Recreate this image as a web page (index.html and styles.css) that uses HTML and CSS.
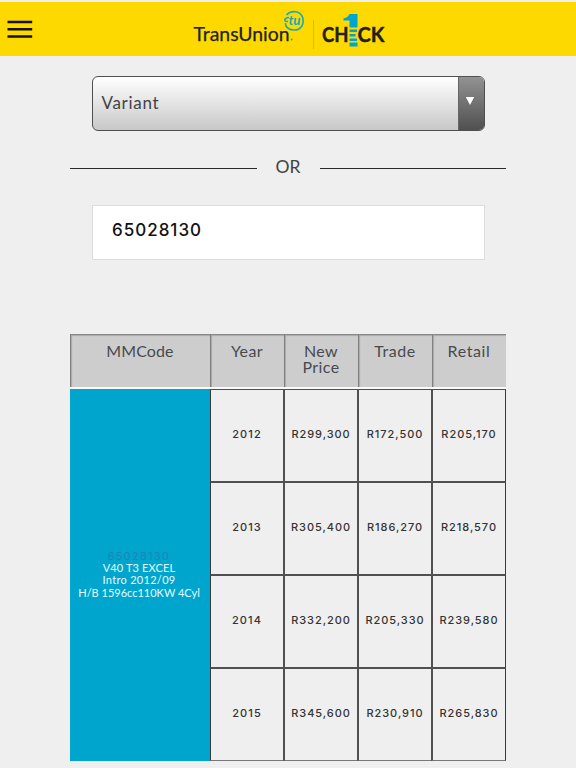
FILE: index.html
```html
<!DOCTYPE html>
<html lang="en">
<head>
<meta charset="utf-8">
<title>TransUnion 1Check</title>
<link rel="stylesheet" href="styles.css">
</head>
<body>
<header class="topbar">
  <button class="menu" aria-label="Menu"><svg width="26" height="18" viewBox="0 0 26 18"><path d="M.5 1.900H25.200M.5 9.300H25.200M.5 16.600H25.200"/></svg></button>
  <svg class="brand" width="196" height="42" viewBox="0 0 196 42" role="img" aria-label="TransUnion 1Check">
    <text class="word" x="1.5" y="31.5" textLength="96" lengthAdjust="spacingAndGlyphs">TransUnion</text>
    <circle class="dot" cx="99.7" cy="30.5" r=".9"/>
    <path class="ring" d="M94.500 6C99 1 108 1.500 110.500 8C113 16 108 21.500 101.500 21C96 21 93 17 93.500 14M97 8.500C91.500 9 91.500 13 96 12.500"/>
    <text class="tu" x="96.5" y="16" textLength="12" lengthAdjust="spacingAndGlyphs">tu</text>
    <path class="rule" d="M121.500 11V40"/>
    <text class="check" x="130" y="32.5" textLength="26.5" lengthAdjust="spacingAndGlyphs">CH</text>
    <text class="check" x="165.5" y="32.5" textLength="27" lengthAdjust="spacingAndGlyphs">CK</text>
    <path class="one" d="M157.500 5H165.500V18.500H157.500V11.500H151.500V9.500Q156 8.500 157.500 5ZM157.500 20.500H165V23H157.500ZM157.500 25H163.500V27.500H157.500ZM157.500 29.500H165V32H157.500ZM157.500 33.500H165.500V37.500H157.500Z"/>
  </svg>
</header>
<main class="content">
  <div class="select"><span class="select-label">Variant</span><span class="select-arrow"><svg width="10" height="8" viewBox="0 0 10 8"><path d="M.8 0H9.200L5 8Z"/></svg></span></div>
  <div class="divider"><span>OR</span></div>
  <div class="code-input">65028130</div>
  <section class="prices">
    <div class="head grid"><div><span class="h-code">MMCode</span></div><div><span class="h-year">Year</span></div><div><span class="h-price">New<br>Price</span></div><div><span class="h-trade">Trade</span></div><div><span class="h-retail">Retail</span></div></div>
    <div class="body grid">
      <div class="vehicle"><a>65028130</a><span class="model">V40 T3 EXCEL</span><span class="intro">Intro 2012/09</span><span class="engine">H/B 1596cc110KW 4Cyl</span></div>
      <div class="cell year">2012</div><div class="cell">R299,300</div><div class="cell">R172,500</div><div class="cell last">R205,170</div>
      <div class="cell year">2013</div><div class="cell">R305,400</div><div class="cell">R186,270</div><div class="cell last">R218,570</div>
      <div class="cell year">2014</div><div class="cell">R332,200</div><div class="cell">R205,330</div><div class="cell last">R239,580</div>
      <div class="cell year">2015</div><div class="cell">R345,600</div><div class="cell">R230,910</div><div class="cell last">R265,830</div>
    </div>
  </section>
</main>
</body>
</html>
```
FILE: styles.css
```css
* { box-sizing: border-box; }
body {
  margin: 0;
  height: 768px;
  overflow: hidden;
  background: #efefef;
  color: #424346;
  font-family: Lato, "Liberation Sans", sans-serif;
}
.topbar {
  display: flex;
  align-items: flex-start;
  height: 54px;
  margin-top: 2px;
  background: #fdd900;
}
.menu {
  width: 25px;
  margin: 18px 0 0 7px;
  padding: 0;
  border: 0;
  background: none;
}
.menu svg { display: block; fill: none; stroke: #151200; stroke-width: 2.5; }
.brand { margin: 7px 0 0 159.5px; overflow: visible; }
.word { font: 19px Lato, sans-serif; fill: #231f20; stroke: #231f20; stroke-width: .25; }
.dot { fill: #8e7b11; }
.ring { fill: none; stroke: #19aaba; stroke-width: 1.6; }
.tu { font: italic bold 14px Lato, sans-serif; fill: #19aaba; }
.rule { stroke: #dab90a; stroke-width: 1; }
.check { font: bold 20px Lato, sans-serif; fill: #231f20; stroke: #231f20; stroke-width: .4; }
.one { fill: #00a5ce; }
.content { width: 436px; margin: 0 0 0 70px; }
.select {
  display: flex;
  width: 393px;
  height: 55px;
  margin: 20px 0 0 21.5px;
  overflow: hidden;
  border: 1.5px solid #505050;
  border-radius: 6px;
  background: linear-gradient(#fff, #c8c8c8);
}
.select-label { flex: 1; padding: 16px 0 0 9px; font-size: 17px; line-height: 20px; letter-spacing: .7px; }
.select-arrow { width: 26px; padding: 20px 0 0 6px; border-left: 1px solid #666; background: linear-gradient(#929292, #505050); }
.select-arrow svg { display: block; fill: #fff; }
.divider {
  display: flex;
  align-items: center;
  gap: 19px;
  height: 24px;
  margin-top: 24px;
  font-size: 17.5px;
}
.divider::before, .divider::after { content: ""; flex: 1; height: 1.5px; margin-top: 3px; background: #29292b; }
.divider span { width: 25px; text-align: center; line-height: 24px; }
.code-input {
  width: 393px;
  height: 55px;
  margin: 26px 0 0 21.5px;
  padding: 13px 0 0 19.5px;
  border: 1px solid #dcdcdc;
  background: #fff;
  color: #111;
  font: 500 17px/22px Inter, sans-serif;
  letter-spacing: 1px;
}
.prices { margin-top: 74px; }
.grid { display: grid; grid-template-columns: 140px 73px 74px 74px 75px; }
.head { grid-template-columns: 140px 74px 74px 74px 74px; height: 53px; margin-bottom: 2px; box-shadow: 0 2px #fafafa; }
.head div {
  padding: 8px 1px 0 0;
  border-top: 1px solid #888;
  border-left: 1px solid #808080;
  background: #cdcdcd;
  box-shadow: inset 1px 1px 1px #aaa;
  color: #484a50;
  font-size: 16px;
  line-height: 16px;
  text-align: center;
}
.h-code { letter-spacing: .1px; }
.h-year, .h-price { letter-spacing: .4px; }
.h-trade, .h-retail { letter-spacing: .6px; }
.body { grid-template-rows: 92px 93px 93px 94px; }
.vehicle {
  grid-row: 1 / 5;
  display: flex;
  flex-direction: column;
  align-items: center;
  padding: 160.5px 2px 0 0;
  background: #00a5ce;
  color: #e5fbff;
  font-size: 11px;
  line-height: 12.4px;
  white-space: nowrap;
}
.vehicle a { color: #287fb7; font: 11px/12.4px Inter, sans-serif; letter-spacing: 1.3px; }
.model { letter-spacing: .15px; }
.intro { letter-spacing: .3px; }
.cell {
  display: flex;
  align-items: center;
  justify-content: center;
  padding: 0 0 3px 0;
  border-top: 2px solid #505050;
  border-left: 2px solid #505050;
  color: #333;
  font: 500 11px/13px Inter, sans-serif;
  letter-spacing: .95px;
}
.year { border-left: 1px solid #3b3b3b; letter-spacing: 1.1px; }
.last { border-right: 1px solid #3b3b3b; }
.cell:nth-child(-n + 5) { padding-bottom: 3px; border-top: 1px solid #505050; }
.cell:nth-child(n + 14) { padding-bottom: 3px; border-bottom: 1px solid #777; }
```
